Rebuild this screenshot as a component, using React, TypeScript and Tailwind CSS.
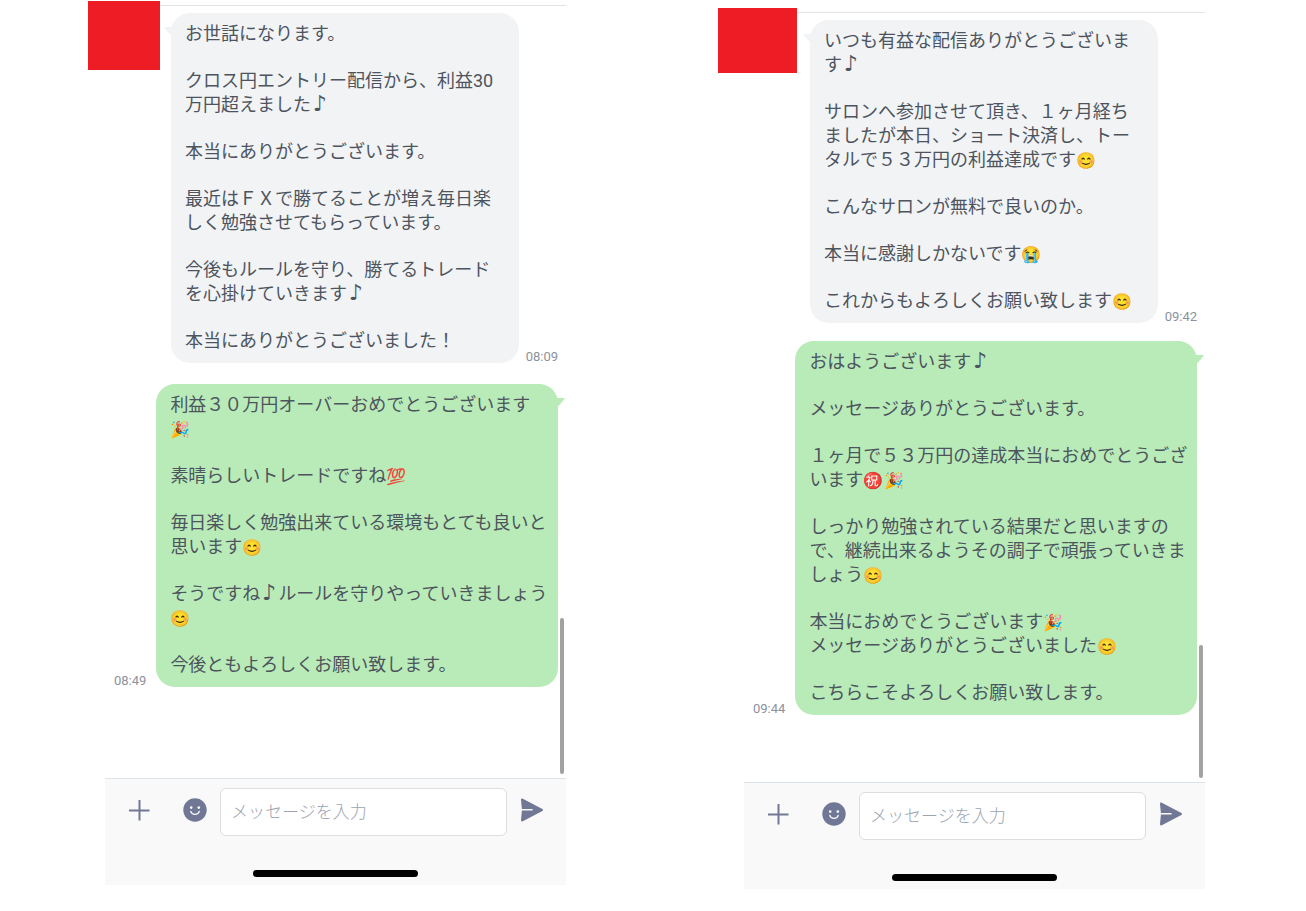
import type { ReactNode } from "react";

type Message = { side: "in" | "out"; time: string; paragraphs: string[][] };

type Chat = {
  id: string;
  panel: string;
  mask: string;
  spacing: string;
  scrollbar: string;
  messages: Message[];
};

const chats: Chat[] = [
  {
    id: "left",
    panel: "pt-[5px] pb-[26px]",
    mask: "top-px -left-[17px] h-[69px] w-[72px]",
    spacing: "gap-[21px]",
    scrollbar: "h-[156px]",
    messages: [
      {
        side: "in",
        time: "08:09",
        paragraphs: [
          ["お世話になります。"],
          ["クロス円エントリー配信から、利益30", "万円超えました♪"],
          ["本当にありがとうございます。"],
          ["最近はＦＸで勝てることが増え毎日楽", "しく勉強させてもらっています。"],
          ["今後もルールを守り、勝てるトレード", "を心掛けていきます♪"],
          ["本当にありがとうございました！"],
        ],
      },
      {
        side: "out",
        time: "08:49",
        paragraphs: [
          ["利益３０万円オーバーおめでとうございます", "🎉"],
          ["素晴らしいトレードですね💯"],
          ["毎日楽しく勉強出来ている環境もとても良いと", "思います😊"],
          ["そうですね♪ルールを守りやっていきましょう", "😊"],
          ["今後ともよろしくお願い致します。"],
        ],
      },
    ],
  },
  {
    id: "right",
    panel: "pt-[12px] pb-[22px]",
    mask: "top-2 -left-[26px] h-[65px] w-[79px]",
    spacing: "gap-[18px]",
    scrollbar: "h-[133px]",
    messages: [
      {
        side: "in",
        time: "09:42",
        paragraphs: [
          ["いつも有益な配信ありがとうございま", "す♪"],
          [
            "サロンへ参加させて頂き、１ヶ月経ち",
            "ましたが本日、ショート決済し、トー",
            "タルで５３万円の利益達成です😊",
          ],
          ["こんなサロンが無料で良いのか。"],
          ["本当に感謝しかないです😭"],
          ["これからもよろしくお願い致します😊"],
        ],
      },
      {
        side: "out",
        time: "09:44",
        paragraphs: [
          ["おはようございます♪"],
          ["メッセージありがとうございます。"],
          ["１ヶ月で５３万円の達成本当におめでとうござ", "います㊗️🎉"],
          [
            "しっかり勉強されている結果だと思いますの",
            "で、継続出来るようその調子で頑張っていきま",
            "しょう😊",
          ],
          ["本当におめでとうございます🎉", "メッセージありがとうございました😊"],
          ["こちらこそよろしくお願い致します。"],
        ],
      },
    ],
  },
];

const symbols = /(🎉|💯|😊|😭|㊗️|♪)/u;

function Line({ text }: { text: string }) {
  return (
    <span className="block h-6">
      {text
        .split(symbols)
        .filter(Boolean)
        .map((part, i) => {
          if (part === "♪") {
            return (
              <span key={i} className="inline-block w-[18px] text-center text-[22px] leading-none font-['DejaVu_Sans',sans-serif]">
                {part}
              </span>
            );
          }
          return symbols.test(part) ? (
            <span key={i} className="mr-px inline-block align-middle text-base leading-5">
              {part}
            </span>
          ) : (
            part
          );
        })}
    </span>
  );
}

function Tail({ side }: { side: "in" | "out" }) {
  return side === "in" ? (
    <svg viewBox="0 0 14 12" className="absolute top-3.5 -left-[7px] h-3 w-3.5 fill-[#f1f3f5]" aria-hidden="true">
      <path d="M0 0H14V12C9 10 4 6 0 0Z" />
    </svg>
  ) : (
    <svg viewBox="0 0 14 12" className="absolute top-3.5 -right-[7px] h-3 w-3.5 fill-[#b8ebb8]" aria-hidden="true">
      <path d="M14 0H0V12C5 11 10 6 14 0Z" />
    </svg>
  );
}

function Bubble({ message }: { message: Message }) {
  const incoming = message.side === "in";
  return (
    <li className={incoming ? "flex items-end gap-[7px] pr-2 pl-[66px]" : "flex flex-row-reverse items-end gap-2.5 pr-2 pl-[9px]"}>
      <div
        className={
          incoming
            ? "relative flex flex-1 flex-col gap-[23px] rounded-[19px] bg-[#f1f3f5] pt-[9px] pr-2 pb-2.5 pl-3.5"
            : "relative flex flex-1 flex-col gap-[23px] rounded-[19px] bg-[#b8ebb8] pt-[9px] pr-2 pb-2.5 pl-3.5"
        }
      >
        <Tail side={message.side} />
        {message.paragraphs.map((lines) => (
          <p key={lines[0]} className="text-lg leading-6 whitespace-nowrap text-[#4d545e]">
            {lines.map((line) => (
              <Line key={line} text={line} />
            ))}
          </p>
        ))}
      </div>
      <time className="text-[13px] leading-3 text-[#8b929d]">{message.time}</time>
    </li>
  );
}

function IconButton({ label, children }: { label: string; children: ReactNode }) {
  return (
    <button type="button" aria-label={label} className="flex h-11 w-6 shrink-0 items-center text-[#707895]">
      <svg viewBox="0 0 24 24" className="size-6" fill="none" aria-hidden="true">
        {children}
      </svg>
    </button>
  );
}

function Composer({ id }: { id: string }) {
  return (
    <form className="mt-auto border-t border-[#dce3ea] bg-[#f9f9f9] px-[22px] pt-[9px] pb-2">
      <div className="flex items-start">
        <IconButton label="追加">
          <path d="M12.5 2V22.5M2 12.5H22.5" stroke="currentColor" strokeWidth="2" />
        </IconButton>
        <div className="ml-8 flex">
          <IconButton label="スタンプ">
            <circle cx="12" cy="12" r="11.7" fill="currentColor" />
            <circle cx="8.2" cy="9.6" r="1.3" fill="#fff" />
            <circle cx="15.8" cy="9.6" r="1.3" fill="#fff" />
            <path d="M7.8 13.4C8.8 17.4 15.2 17.4 16.2 13.4" stroke="#fff" strokeWidth="1.3" strokeLinecap="round" />
          </IconButton>
        </div>
        <input
          id={id}
          type="text"
          aria-label="メッセージを入力"
          placeholder="メッセージを入力"
          className="mx-[13px] h-12 min-w-0 flex-1 rounded-md border border-[#dcdde0] bg-white px-2.5 text-[17px] text-[#4d545e] placeholder:font-light placeholder:text-[#9ba4b0]"
        />
        <IconButton label="送信">
          <path
            d="M1 2C.9 .9 1.9 .3 2.8 .8L22.4 11.1C23.3 11.6 23.3 12.4 22.4 12.9L2.8 23.2C1.9 23.7 .9 23.1 1 22L1.9 12.6H12.6V11.1H1.9Z"
            fill="currentColor"
          />
        </IconButton>
      </div>
      <div className="mx-auto mt-[34px] h-[7px] w-[165px] rounded-full bg-black" />
    </form>
  );
}

export default function App() {
  return (
    <main className="grid min-h-screen grid-cols-2 gap-x-[178px] bg-white pr-[101px] pl-[105px] font-[Roboto,'Noto_Sans_CJK_JP',sans-serif]">
      {chats.map((chat) => (
        <section key={chat.id} className={`relative flex flex-col ${chat.panel}`}>
          <div className="relative flex-1 border-t border-[#dfe4e9] pt-[7px]">
            <ol className={`flex flex-col ${chat.spacing}`}>
              {chat.messages.map((message) => (
                <Bubble key={message.time} message={message} />
              ))}
            </ol>
            <div className={`absolute right-0.5 bottom-1 w-1 rounded-full bg-[#a2a2a2] ${chat.scrollbar}`} />
          </div>
          <Composer id={`message-${chat.id}`} />
          <div className={`absolute bg-[#ee1c25] ${chat.mask}`} />
        </section>
      ))}
    </main>
  );
}
